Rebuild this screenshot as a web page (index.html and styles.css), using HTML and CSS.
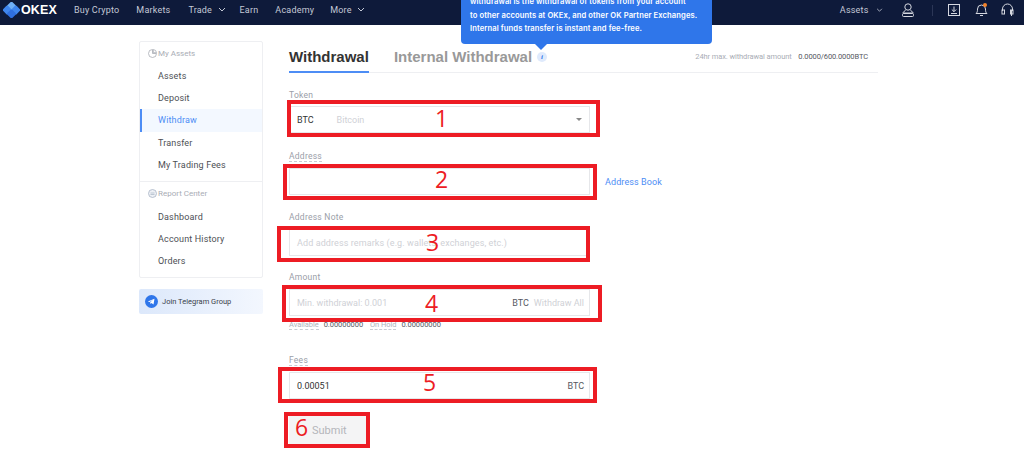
FILE: index.html
```html
<!DOCTYPE html>
<html lang="en">
<head>
<meta charset="utf-8">
<title>OKEx Withdrawal</title>
<link rel="stylesheet" href="styles.css">
</head>
<body>
<header class="topbar">
  <div class="logo">
    <svg class="logo-mark" width="17" height="16" viewBox="0 0 17 16"><g><rect x="5" y="0.600" width="7" height="7" rx="1.500" fill="#6fb0f7" transform="rotate(45 8.500 4.100)"/><rect x="0.700" y="4.500" width="7" height="7" rx="1.500" fill="#3f86ee" transform="rotate(45 4.200 8)"/><rect x="9.300" y="4.500" width="7" height="7" rx="1.500" fill="#3f86ee" transform="rotate(45 12.800 8)"/><rect x="5" y="8.400" width="7" height="7" rx="1.500" fill="#2f6fe0" transform="rotate(45 8.500 11.900)"/></g></svg>
    <span class="logo-text">OKEX</span>
  </div>
  <nav class="nav">
    <a class="nav-item nav-buy">Buy Crypto</a>
    <a class="nav-item nav-markets">Markets</a>
    <a class="nav-item nav-trade">Trade <svg class="chev" width="8" height="5" viewBox="0 0 8 5"><path d="M1 1l3 3 3-3" fill="none" stroke="#c4c9d6" stroke-width="1"/></svg></a>
    <a class="nav-item nav-earn">Earn</a>
    <a class="nav-item nav-academy">Academy</a>
    <a class="nav-item">More <svg class="chev" width="8" height="5" viewBox="0 0 8 5"><path d="M1 1l3 3 3-3" fill="none" stroke="#c4c9d6" stroke-width="1"/></svg></a>
  </nav>
  <div class="top-right">
    <a class="nav-item assets">Assets <svg class="chev chev-s" width="7" height="4" viewBox="0 0 8 5"><path d="M1 1l3 3 3-3" fill="none" stroke="#c4c9d6" stroke-width="1"/></svg></a>
    <svg class="ti ti-user" width="14" height="16" viewBox="0 0 14 16"><circle cx="7" cy="5" r="3.200" fill="none" stroke="#d5d8e0"/><path d="M4.500 8.500C2 9.500 2 11 2 11h10s0-1.500-2.500-2.500M2.500 11.500h9a1 1 0 0 1 1 1v1a1 1 0 0 1-1 1h-9a1 1 0 0 1-1-1v-1a1 1 0 0 1 1-1z" fill="none" stroke="#d5d8e0"/></svg>
    <span class="ti-sep"></span>
    <svg class="ti ti-down" width="12" height="12" viewBox="0 0 12 12"><rect x=".5" y=".5" width="11" height="11" fill="none" stroke="#d5d8e0"/><path d="M6 2.500v5M3.800 5.500L6 7.700l2.200-2.200M3 9.500h6" fill="none" stroke="#d5d8e0"/></svg>
    <span class="bell">
      <svg class="ti" width="13" height="14" viewBox="0 0 13 14"><path d="M1 10.500c1.200-1 1.500-2 1.500-4.500a4 4 0 0 1 8 0c0 2.500.3 3.500 1.500 4.500zM5 12.500h3" fill="none" stroke="#d5d8e0"/></svg>
      <i class="bell-dot"></i>
    </span>
    <svg class="ti ti-head" width="13" height="14" viewBox="0 0 13 14"><path d="M1.500 8V6a5 5 0 0 1 10 0v2" fill="none" stroke="#d5d8e0"/><rect x="1" y="7" width="2.500" height="4" fill="none" stroke="#d5d8e0"/><path d="M10.500 7v6" stroke="#d5d8e0"/><rect x="9.500" y="7" width="2.500" height="4" fill="none" stroke="#d5d8e0"/></svg>
  </div>
</header>

<div class="tooltip">
  <p>withdrawal is the withdrawal of tokens from your account</p>
  <p>to other accounts at OKEx, and other OK Partner Exchanges.</p>
  <p>Internal funds transfer is instant and fee-free.</p>
</div>

<div class="page">
  <aside class="side">
    <div class="menu">
      <div class="menu-title">
        <svg width="9" height="9" viewBox="0 0 9 9"><path d="M4.500.5a4 4 0 1 0 4 4h-4z" fill="none" stroke="#a8acb4" stroke-width=".8"/><path d="M5.300 0.500a3.500 3.500 0 0 1 3.200 3.200H5.300z" fill="none" stroke="#a8acb4" stroke-width=".8"/></svg>
        <span>My Assets</span>
      </div>
      <a class="menu-item">Assets</a>
      <a class="menu-item">Deposit</a>
      <a class="menu-item is-active">Withdraw</a>
      <a class="menu-item">Transfer</a>
      <a class="menu-item">My Trading Fees</a>
      <div class="menu-sep"></div>
      <div class="menu-title">
        <svg width="9" height="9" viewBox="0 0 9 9"><circle cx="4.500" cy="4.500" r="4" fill="#eef1f6" stroke="#a8b4c4" stroke-width=".8"/><path d="M2.500 4h4M2.500 5.500h4" stroke="#a8b4c4" stroke-width=".7"/></svg>
        <span>Report Center</span>
      </div>
      <a class="menu-item">Dashboard</a>
      <a class="menu-item">Account History</a>
      <a class="menu-item">Orders</a>
    </div>
    <a class="tg">
      <svg width="13" height="13" viewBox="0 0 13 13"><circle cx="6.500" cy="6.500" r="6.500" fill="#2f76ea"/><path d="M2.800 6.500l6.700-2.800-1 5.800-2-1.500-1 1-.3-1.800 3-2.400-3.700 2.100z" fill="#fff"/></svg>
      <span>Join Telegram Group</span>
    </a>
  </aside>

  <main class="main">
    <div class="tabs">
      <span class="tab is-current">Withdrawal</span>
      <span class="tab">Internal Withdrawal</span>
      <i class="info">i</i>
      <span class="limit">24hr max. withdrawal amount <b>0.0000/600.0000BTC</b></span>
    </div>

    <form class="form">
      <div class="field f-token">
        <label class="lbl">Token</label>
        <div class="box">
          <span class="val">BTC</span><span class="ph token-name">Bitcoin</span>
          <i class="caret"></i>
        </div>
      </div>
      <div class="field f-addr">
        <label class="lbl"><span class="dotted">Address</span></label>
        <div class="row">
          <div class="box"></div>
          <a class="book">Address Book</a>
        </div>
      </div>
      <div class="field f-note">
        <label class="lbl">Address Note</label>
        <div class="box"><span class="ph note-ph">Add address remarks (e.g. wallets, exchanges, etc.)</span></div>
      </div>
      <div class="field f-amount">
        <label class="lbl">Amount</label>
        <div class="box">
          <span class="ph">Min. withdrawal: 0.001</span>
          <span class="unit">BTC</span><span class="ph all">Withdraw All</span>
        </div>
        <div class="avail">
          <span class="dotted">Available</span><b>0.00000000</b>
          <span class="dotted">On Hold</span><b>0.00000000</b>
        </div>
      </div>
      <div class="field f-fees">
        <label class="lbl"><span class="dotted">Fees</span></label>
        <div class="box"><span class="val">0.00051</span><span class="unit">BTC</span></div>
      </div>
      <button class="submit" type="button">Submit</button>
    </form>
  </main>
</div>

<div class="mark m1"><span>1</span></div>
<div class="mark m2"><span>2</span></div>
<div class="mark m3"><span>3</span></div>
<div class="mark m4"><span>4</span></div>
<div class="mark m5"><span>5</span></div>
<div class="mark m6"><span>6</span></div>
</body>
</html>
```
FILE: styles.css
```css
* { box-sizing: border-box; }
html, body { margin: 0; padding: 0; }
body {
  width: 1024px; height: 460px; overflow: hidden; position: relative;
  background: #fff; color: #333;
  font-family: Roboto, "Liberation Sans", sans-serif; font-size: 10px;
}
p { margin: 0; }

/* top bar */
.topbar {
  height: 25px; background: #0e1a3a; display: flex; align-items: center;
  padding: 0 10px 5px 3px;
}
.logo { display: flex; align-items: center; width: 71px; }
.logo-text { color: #fff; font: 700 12.500px "Liberation Sans", sans-serif; margin-left: 1px; letter-spacing: .1px; }
.nav { display: flex; align-items: center; }
.nav-item { color: #c4c9d6; font-size: 9px; letter-spacing: .2px; white-space: nowrap; }
.nav-buy { margin-right: 17px; }
.nav-markets { margin-right: 18px; }
.nav-trade { margin-right: 14px; }
.nav-earn { margin-right: 17px; }
.nav-academy { margin-right: 16px; }
.chev { margin-left: 3px; vertical-align: 1px; }
.chev-s { margin-left: 5px; }
.top-right { margin-left: auto; display: flex; align-items: center; }
.assets { margin-right: 18px; }
.ti-sep { width: 1px; height: 11px; background: #2b3656; margin: 0 15px 0 17px; }
.ti-down { margin-right: 15px; }
.bell { position: relative; display: flex; margin-right: 13px; }
.bell-dot { position: absolute; top: 0; right: 1px; width: 4px; height: 4px; border-radius: 2px; background: #f5842a; }

/* tooltip */
.tooltip {
  position: absolute; left: 461px; top: 0; width: 251px; height: 44px;
  background: #2f76ea; border-radius: 0 0 4px 4px; color: #fff;
  font: 600 7.600px/13.700px Inter, Roboto, sans-serif; letter-spacing: .1px;
  padding: 0 0 0 9px; white-space: nowrap; overflow: visible;
}
.tooltip p:first-child { margin-top: -5px; }
.tooltip::after {
  content: ""; position: absolute; left: 74px; top: 44px;
  border: 6px solid transparent; border-top-color: #2f76ea; border-bottom: 0;
}

/* layout */
.page { display: flex; padding: 16px 0 0 139px; }
.side { width: 124px; margin-right: 26px; flex: none; }
.menu {
  height: 237px; border: 1px solid #eeeff2; border-radius: 2px; padding-top: 5px;
}
.menu-title {
  display: flex; align-items: center; height: 12px; padding-left: 8px;
  color: #a9adb5; font-size: 8px; margin-bottom: 6px;
}
.menu-title span { margin-left: 1px; }
.menu-item {
  display: block; height: 22.200px; line-height: 22.200px; padding-left: 18px;
  color: #4d4f55; font-size: 9px; letter-spacing: .15px;
}
.is-active { background: #f3f8ff; color: #4d8df5; border-left: 2px solid #4d8df5; padding-left: 16px; }
.menu-sep { height: 1px; background: #eeeff2; margin: 5px 0 6px; }
.tg {
  display: flex; align-items: center; height: 25px; margin-top: 11px; padding-left: 6px;
  border-radius: 2px; background: linear-gradient(90deg, #dce8fb, #f3f7fe);
  color: #3a3f4a; font-size: 7.500px;
}
.tg span { margin-left: 4px; }

.main { width: 589px; flex: none; }
.tabs {
  display: flex; align-items: center; height: 32px; border-bottom: 1px solid #eeeff2;
  position: relative;
}
.tab { font: 700 15px/31px "Liberation Sans", sans-serif; color: #999; height: 32px; white-space: nowrap; }
.is-current { color: #333; border-bottom: 2px solid #4d8df5; margin-right: 25px; }
.info {
  width: 10px; height: 10px; border-radius: 5px; background: #dfeafc; color: #2f76ea;
  font: italic 700 7px/10px "Liberation Serif", serif; text-align: center; margin-left: 5px;
}
.limit { margin-left: auto; margin-right: 10px; font-size: 7.500px; color: #a9adb5; white-space: nowrap; letter-spacing: -.1px; }
.limit b { font-weight: 400; color: #55585f; margin-left: 5px; }

.form { display: block; }
.field { display: block; }
.lbl { display: block; height: 12px; line-height: 12px; color: #9a9ea8; font-size: 8.500px; letter-spacing: .25px; margin-bottom: 6px; }
.f-token .lbl { margin-bottom: 5px; }
.dotted { border-bottom: 1px dashed #c8ccd3; }
.box {
  width: 301px; height: 27px; border: 1px solid #e6e7ea; display: flex; align-items: center;
  padding: 0 5px 0 7px; font-size: 9px; position: relative; background: #fff;
}
.val { color: #333; }
.ph { color: #cfd1d6; white-space: nowrap; }
.note-ph { letter-spacing: .1px; }
.token-name { margin-left: 23px; }
.caret {
  margin-left: auto; margin-right: 2px; border: 3px solid transparent; border-top-color: #888; border-bottom: 0;
  width: 0; height: 0;
}
.unit { margin-left: auto; color: #55585f; }
.all { margin-left: 5px; }
.row { display: flex; align-items: center; }
.book { color: #4d8df5; font-size: 9px; margin-left: 15px; letter-spacing: .1px; }
.f-token { margin-top: 16px; }
.f-addr { margin-top: 17px; }
.f-note { margin-top: 16px; }
.f-amount { margin-top: 15px; }
.avail { font-size: 7.500px; color: #aeb2b9; margin-top: 3px; height: 12px; line-height: 12px; white-space: nowrap; letter-spacing: -.05px; }
.avail b { font-weight: 400; color: #55585f; margin: 0 5px 0 5px; }
.f-fees { margin-top: 23px; }
.submit {
  display: block; width: 78px; height: 28px; margin-top: 17px; border: 0; background: #f4f4f5;
  color: #b4b6bb; font: 400 11px Roboto, sans-serif; padding: 0 0 0 23px; text-align: left;
}

/* red annotation frames drawn over the form */
.mark {
  position: absolute; border: 4px solid #ed1c24; color: #ed1c24;
  font: 400 23px/1 "Open Sans", sans-serif; display: flex; align-items: center;
}
.m1 { left: 287px; top: 100px; width: 313px; height: 37px; padding: 0 0 0 144px; }
.m2 { left: 283px; top: 164px; width: 314px; height: 36px; padding: 0 0 6px 148px; }
.m3 { left: 277px; top: 226px; width: 313px; height: 36px; padding: 0 0 4px 145px; }
.m4 { left: 282px; top: 285px; width: 320px; height: 37px; padding-left: 139px; }
.m5 { left: 278px; top: 367px; width: 319px; height: 36px; padding: 0 0 6px 141px; }
.m6 { left: 284px; top: 412px; width: 86px; height: 36px; padding: 0 0 6px 7px; }
```
